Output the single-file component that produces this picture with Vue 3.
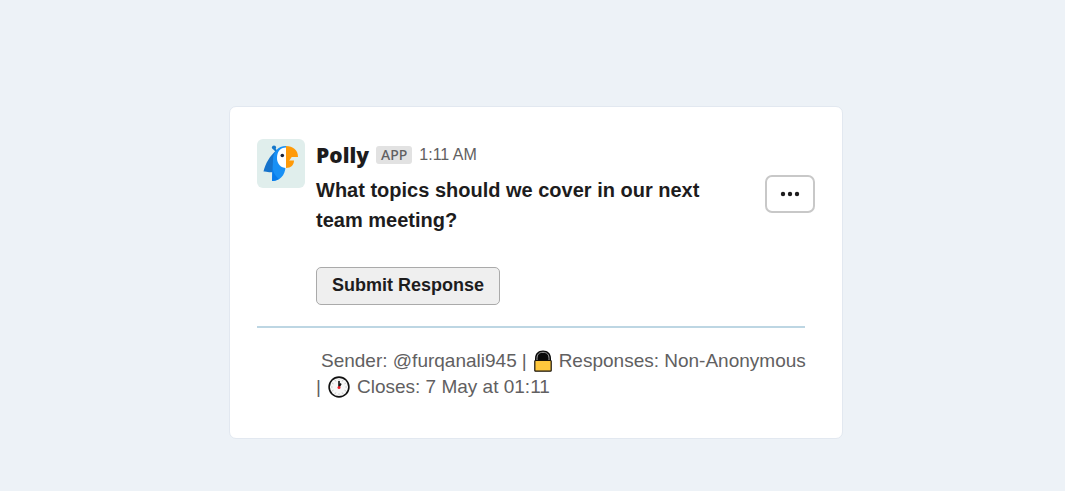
<script setup>
const poll = {
  app: 'Polly',
  time: '1:11 AM',
  question: 'What topics should we cover in our next team meeting?',
  sender: '@furqanali945',
  responses: 'Non-Anonymous',
  closes: '7 May at 01:11',
}
const ticks = Array.from({ length: 12 }, (_, i) => i * 30)
</script>

<template>
  <main class="page">
    <article class="card">
      <div class="message">
        <svg class="avatar" viewBox="0 0 48 49" role="img" aria-label="Polly logo">
          <rect width="48" height="49" rx="6" fill="#e0eeec" />
          <path d="M17 9.5 L20 13" stroke="#1777c8" stroke-width="2" />
          <circle cx="17" cy="8.500" r="2.100" fill="#1777c8" />
          <path d="M19 11.500 C13 17 8.500 24 6.500 32.500 C10 32 12.500 34 15.500 33 L22 28 Z" fill="#1673cb" />
          <path d="M29 7 C21 7 16 13 16 21 L15 42 C22 42 28.500 37 28.500 27 Z" fill="#1890f5" />
          <path d="M15.500 24 L15 42 C18 42 20 41 22 40 C17 36 15 31 15.500 24 Z" fill="#087bea" />
          <path d="M29 8.500 C23 8.500 20 13 20 19 C20 25 24 29 29 29 Z" fill="#fff" />
          <circle cx="25.300" cy="16.500" r="1.800" fill="#17233d" />
          <path d="M29 7 C36 7 41 11 41 18 L29 18 Z" fill="#ff9a08" />
          <path d="M29 21.500 L37 21.500 C37 26 34 29 29 29 Z" fill="#ff9a08" />
          <path d="M29 17.500 H35 L32 22 H29 Z" fill="#ff9a08" />
        </svg>
        <div class="body">
          <header class="byline">
            <strong class="name">{{ poll.app }}</strong>
            <span class="badge">APP</span>
            <time class="time">{{ poll.time }}</time>
          </header>
          <h1 class="question">{{ poll.question }}</h1>
          <button class="submit" type="button">Submit Response</button>
        </div>
        <button class="more" type="button" aria-label="More options">
          <svg width="20" height="6" viewBox="0 0 20 6" aria-hidden="true">
            <circle cx="3" cy="3" r="2.200" />
            <circle cx="10" cy="3" r="2.200" />
            <circle cx="17" cy="3" r="2.200" />
          </svg>
        </button>
      </div>
      <footer class="footer">
        <div class="meta">
          <span class="sender">Sender: {{ poll.sender }}</span>
          <span>|</span>
          <svg class="lock" viewBox="0 0 18 22" aria-hidden="true">
            <path d="M1 11 V8.500 C1 3.500 4 .5 9 .5 S17 3.500 17 8.500 V11 Z" fill="#080808" />
            <path d="M3 10 V8.500 C3 4.500 5 2.300 9 2.300 S15 4.500 15 8.500 V10" fill="none" stroke="#a6a6a6" stroke-width="1" />
            <rect x=".8" y="10.500" width="16.400" height="10.700" rx=".8" fill="#ffc83d" stroke="#17120a" stroke-width="1.200" />
          </svg>
          <span>Responses: {{ poll.responses }}</span>
          <span>|</span>
          <svg class="clock" viewBox="0 0 22 22" aria-hidden="true">
            <circle cx="11" cy="11" r="9.900" fill="#f7f7f7" stroke="#111" stroke-width="1.600" />
            <path v-for="a in ticks" :key="a" d="M11 3 V4.600" stroke="#b5b5b5" stroke-width=".7" :transform="`rotate(${a} 11 11)`" />
            <path d="M11 11 V5 M11 11 L13 7.500" stroke="#111" stroke-width="1.600" />
            <circle cx="11" cy="11.500" r="1.500" fill="#f0202c" />
          </svg>
          <span>Closes: {{ poll.closes }}</span>
        </div>
      </footer>
    </article>
  </main>
</template>

<style>
body {
  background: #edf2f7;
}
</style>

<style scoped>
.page {
  padding: 106px 222px 52px 229px;
  font-family: "Liberation Sans", Arial, sans-serif;
  color: #1d1c1d;
}
.card {
  padding: 32px 27px 38px;
  border: 1px solid #e2e8f0;
  border-radius: 7px;
  background: #fff;
}
.message {
  display: flex;
}
.avatar {
  flex: none;
  width: 48px;
  height: 49px;
}
.body {
  flex: 1;
  min-width: 0;
  margin: 0 48px 0 11px;
}
.byline {
  display: flex;
  align-items: center;
  gap: 7px;
  height: 32px;
}
.name {
  font: 800 21px/28px "Open Sans", sans-serif;
}
.badge {
  padding: 0 5px;
  border-radius: 3px;
  background: #e2e2e2;
  color: #616061;
  font: 500 14px/18px "Noto Sans", sans-serif;
}
.time {
  color: #616061;
  font-size: 16px;
}
.question {
  margin: 4px 0 32px;
  font-size: 20px;
  line-height: 30px;
}
.submit {
  display: block;
  height: 38px;
  padding: 0 15px 2px;
  border: 1px solid #aaa;
  border-radius: 5px;
  background: #efefef;
  color: #1d1c1d;
  font: 700 18px/24px "Liberation Sans", Arial, sans-serif;
}
.more {
  display: flex;
  flex: none;
  align-items: center;
  justify-content: center;
  width: 50px;
  height: 38px;
  margin-top: 36px;
  padding: 0;
  border: 2px solid #c8c8c8;
  border-radius: 7px;
  background: #fff;
  fill: #1d1c1d;
}
.footer {
  margin: 21px 10px 0 0;
  padding: 20px 0 0 59px;
  border-top: 2px solid #bdd6e3;
}
.meta {
  display: flex;
  flex-wrap: wrap;
  align-items: center;
  column-gap: 5px;
  margin-right: -6px;
  color: #616061;
  font-size: 19px;
  line-height: 26px;
}
.sender {
  margin-left: 5px;
}
.lock,
.clock {
  height: 22px;
  margin: 0 2px;
}
.lock {
  width: 18px;
}
.clock {
  width: 22px;
}
</style>
